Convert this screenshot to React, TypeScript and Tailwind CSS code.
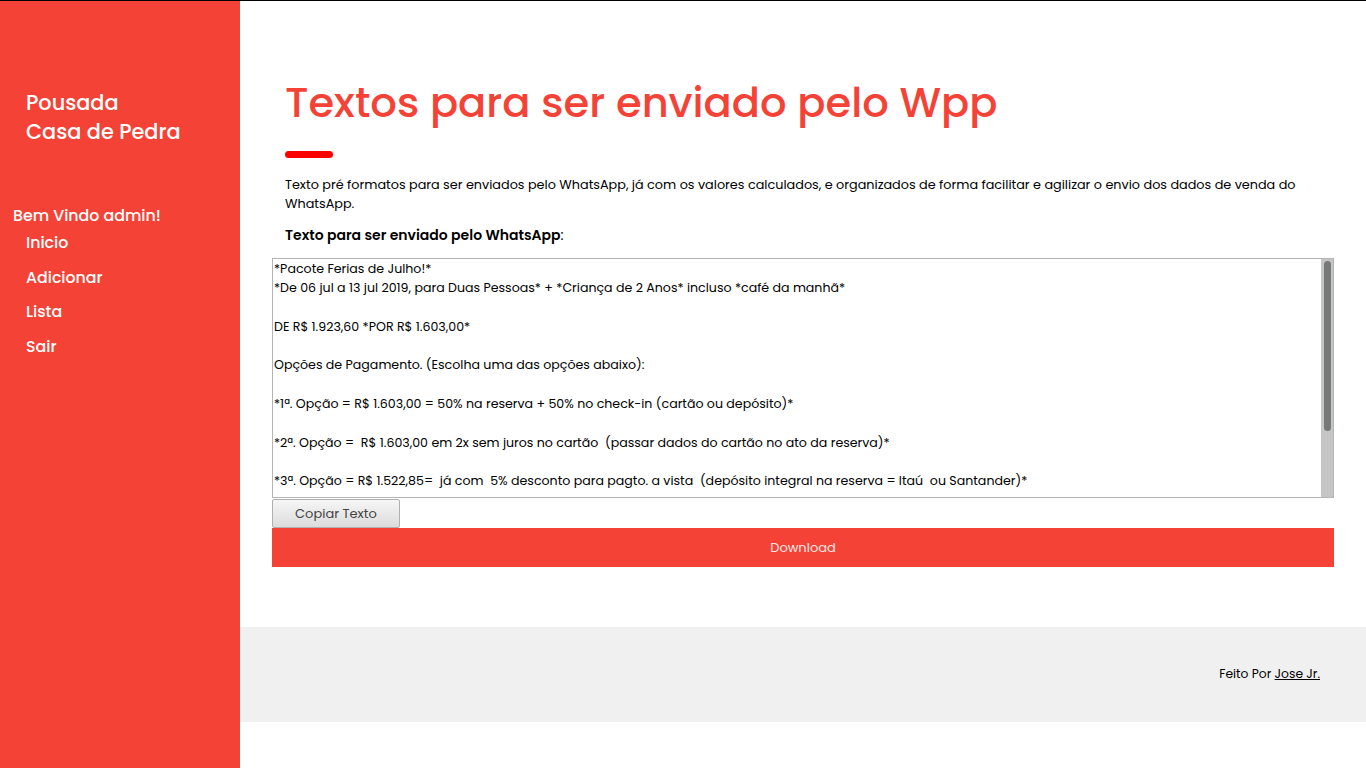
import React from 'react';

const mensagem = `*Pacote Ferias de Julho!*
*De 06 jul a 13 jul 2019, para Duas Pessoas* + *Criança de 2 Anos* incluso *café da manhã*

DE R$ 1.923,60 *POR R$ 1.603,00*

Opções de Pagamento. (Escolha uma das opções abaixo):

*1ª. Opção = R$ 1.603,00 = 50% na reserva + 50% no check-in (cartão ou depósito)*

*2ª. Opção =  R$ 1.603,00 em 2x sem juros no cartão  (passar dados do cartão no ato da reserva)*

*3ª. Opção = R$ 1.522,85=  já com  5% desconto para pagto. a vista  (depósito integral na reserva = Itaú  ou Santander)*

*Check-in a partir das 14h e Check-out até as 12h*

*Pousada Casa de Pedra agradece a preferência!*
`;

const menu = ['Inicio', 'Adicionar', 'Lista', 'Sair'];

export default function App() {
  return (
    <div className="flex min-h-screen border-t border-black font-['Poppins','Inter','Noto_Sans',sans-serif]">
      <aside className="w-[240px] shrink-0 bg-[#f44336] text-white">
        <h1 className="mt-[87px] px-[26px] text-[20.8px] font-medium leading-[29px]">
          Pousada
          <br />
          Casa de Pedra
        </h1>
        <p className="mt-[60px] px-[13px] text-[15.8px] font-medium leading-[20px]">Bem Vindo admin!</p>
        <nav className="mt-[7px] flex flex-col gap-[14px] px-[26px]">
          {menu.map((item) => (
            <a key={item} href="#" className="text-[15.8px] font-medium leading-[20.5px]">
              {item}
            </a>
          ))}
        </nav>
      </aside>

      <main className="flex-1">
        <section className="px-[32px] pt-[76px] pb-[60px]">
          <div className="px-[13px]">
            <h2 className="text-[41.6px] font-medium leading-[52px] text-[#f44336]">Textos para ser enviado pelo Wpp</h2>
            <div className="mt-[22px] h-[7px] w-[48px] rounded-full bg-[#ff0000]" />
            <p className="mt-[17px] text-[12.8px] leading-[19px] text-black">
              Texto pré formatos para ser enviados pelo WhatsApp, já com os valores calculados, e organizados de forma facilitar e agilizar o envio dos dados de venda do WhatsApp.
            </p>
            <p className="mt-[13px] text-[14px] leading-[19px] text-black">
              <b className="font-semibold">Texto para ser enviado pelo WhatsApp</b>:
            </p>
          </div>

          <div className="mt-[13px] flex h-[240px] border border-[#b4b4b4]">
            <textarea
              readOnly
              value={mensagem}
              className="block h-full flex-1 resize-none overflow-hidden pl-[1px] pt-0 text-[12.6px] leading-[19.3px] text-black outline-none"
            />
            <div className="flex w-[12px] shrink-0 justify-center bg-[#c4c5c4] pt-[2px]">
              <div className="h-[170px] w-[7px] rounded-full bg-[#767979]" />
            </div>
          </div>
          <button className="mt-[1px] block h-[29px] w-[128px] rounded-[2px] border border-[#b0b0b0] bg-gradient-to-b from-[#f6f6f6] to-[#dcdcdc] text-[13px] text-[#444]">
            Copiar Texto
          </button>
          <button className="block h-[39px] w-full bg-[#f44336] text-[13px] text-[#fde7e5]">Download</button>
        </section>

        <footer className="flex h-[95px] items-center justify-end bg-[#f0f0f0] pr-[46px] text-[12.3px] text-black">
          <span>
            Feito Por{' '}
            <a href="#" className="underline">
              Jose Jr.
            </a>
          </span>
        </footer>
      </main>
    </div>
  );
}
